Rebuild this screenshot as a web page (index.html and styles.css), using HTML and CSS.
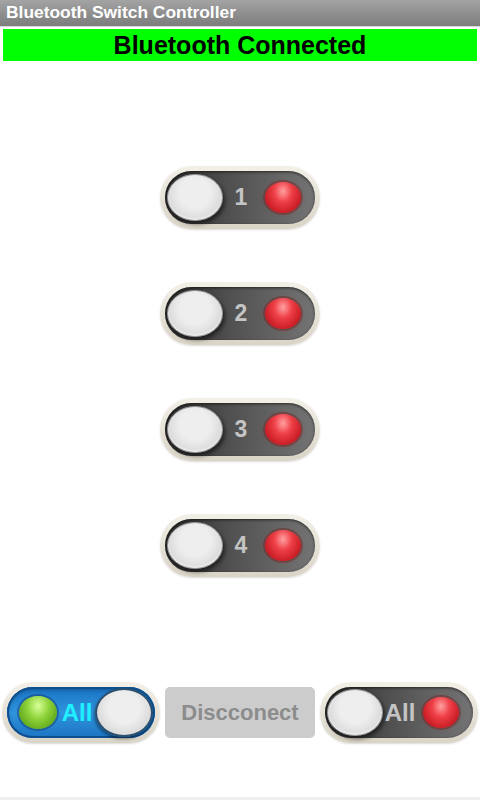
FILE: index.html
```html
<!DOCTYPE html>
<html lang="en">
<head>
    <meta charset="UTF-8">
    <meta name="viewport" content="width=device-width, initial-scale=1.0">
    <title>Bluetooth Switch Controller</title>
    <link rel="stylesheet" href="styles.css">
</head>
<body>
    <!-- Title bar -->
    <div class="titlebar">Bluetooth Switch Controller</div>

    <!-- Status -->
    <div class="status">Bluetooth Connected</div>

    <!-- Switches -->
    <div class="switches">
        <div class="switch">
            <div class="track">
                <div class="knob"></div>
                <span class="label">1</span>
                <div class="led red"></div>
            </div>
        </div>
        <div class="switch">
            <div class="track">
                <div class="knob"></div>
                <span class="label">2</span>
                <div class="led red"></div>
            </div>
        </div>
        <div class="switch">
            <div class="track">
                <div class="knob"></div>
                <span class="label">3</span>
                <div class="led red"></div>
            </div>
        </div>
        <div class="switch">
            <div class="track">
                <div class="knob"></div>
                <span class="label">4</span>
                <div class="led red"></div>
            </div>
        </div>
    </div>

    <!-- Bottom controls -->
    <div class="bottom-row">
        <div class="switch wide">
            <div class="track on">
                <div class="led green"></div>
                <span class="label">All</span>
                <div class="knob"></div>
            </div>
        </div>
        <button class="disconnect">Discconect</button>
        <div class="switch wide">
            <div class="track">
                <div class="knob"></div>
                <span class="label">All</span>
                <div class="led red"></div>
            </div>
        </div>
    </div>

    <div class="navbar"></div>
</body>
</html>
```

FILE: styles.css
```css
body {
    margin: 0;
    height: 800px;
    background: #fff;
    font-family: "Liberation Sans", Arial, sans-serif;
    display: flex;
    flex-direction: column;
    overflow: hidden;
}

.titlebar {
    height: 26px;
    line-height: 24px;
    padding-left: 6px;
    background: linear-gradient(#a3a3a3, #7c7c7c);
    color: #fff;
    font-size: 17.4px;
    font-weight: bold;
    border-bottom: 1px solid #d8d8d8;
}

.status {
    margin: 2px 3px 0;
    height: 32px;
    line-height: 33px;
    background: #00ff00;
    color: #000;
    text-align: center;
    font-size: 25px;
    font-weight: bold;
}

.switches {
    display: flex;
    flex-direction: column;
    align-items: center;
    gap: 53px;
    padding-top: 105px;
}

.switch {
    width: 160px;
    height: 63px;
    box-sizing: border-box;
    padding: 5px;
    border-radius: 32px;
    background: linear-gradient(#f3f0e8, #d9d4c6);
    box-shadow: 0 1px 2px rgba(0, 0, 0, 0.15);
}

.track {
    height: 100%;
    border-radius: 27px;
    display: flex;
    align-items: center;
    background: linear-gradient(to right, #2a2a2a, #4e4e4e 40%, #747474);
    box-shadow: inset 0 1px 3px rgba(0, 0, 0, 0.6);
}

.knob {
    width: 54px;
    height: 45px;
    margin-left: 2px;
    flex-shrink: 0;
    border-radius: 50%;
    background: radial-gradient(ellipse at 50% 40%, #eeeeee 40%, #d2d2d2 85%, #bdbdbd);
    border: 1px solid #9a9a9a;
    box-shadow: 2px 3px 4px rgba(0, 0, 0, 0.55), inset 0 -1px 2px rgba(255, 255, 255, 0.8);
}

.label {
    flex: 1;
    text-align: center;
    padding-right: 6px;
    color: #c4c4c4;
    font-size: 23px;
    font-weight: bold;
}

.led {
    width: 36px;
    height: 31px;
    margin-right: 14px;
    flex-shrink: 0;
    border-radius: 50%;
}

.led.red {
    background: radial-gradient(ellipse at 50% 30%, #ffa0a0 0, #ef4048 35%, #c81a22 75%, #901015);
    box-shadow: 0 0 0 2px rgba(90, 30, 30, 0.4), 0 0 4px rgba(255, 60, 60, 0.4);
}

.led.green {
    margin-left: 12px;
    margin-right: 0;
    width: 38px;
    height: 33px;
    background: radial-gradient(ellipse at 50% 30%, #d8ff9a 0, #8fd33a 40%, #5ea51a 80%, #3d7a10);
    box-shadow: 0 0 0 2px rgba(20, 60, 120, 0.5);
}

.bottom-row {
    display: flex;
    align-items: center;
    gap: 5px;
    padding-left: 2px;
    margin-top: 105px;
}

.switch.wide {
    width: 158px;
    height: 61px;
}

.track.on {
    background: linear-gradient(#1a73c4, #2f93dc 50%, #1c74c2);
    box-shadow: inset 0 0 0 2px #0d4f8f, inset 0 2px 4px rgba(0, 0, 0, 0.4);
}

.track.on .label {
    color: #1ef0ff;
    padding-right: 0;
    padding-left: 2px;
}

.track.on .knob {
    margin-left: 0;
    margin-right: 2px;
    border: 2px solid #2a4f6f;
    box-shadow: -1px 2px 3px rgba(0, 0, 0, 0.4);
}

.switch.wide .track .label {
    font-size: 24px;
}

.disconnect {
    width: 150px;
    height: 51px;
    border: none;
    border-radius: 5px;
    background: #cccccc;
    color: #8c8c8c;
    font-family: "Liberation Sans", Arial, sans-serif;
    font-size: 22px;
    font-weight: bold;
    padding: 0;
}

.navbar {
    margin-top: auto;
    height: 3px;
    background: #efefef;
}
```
